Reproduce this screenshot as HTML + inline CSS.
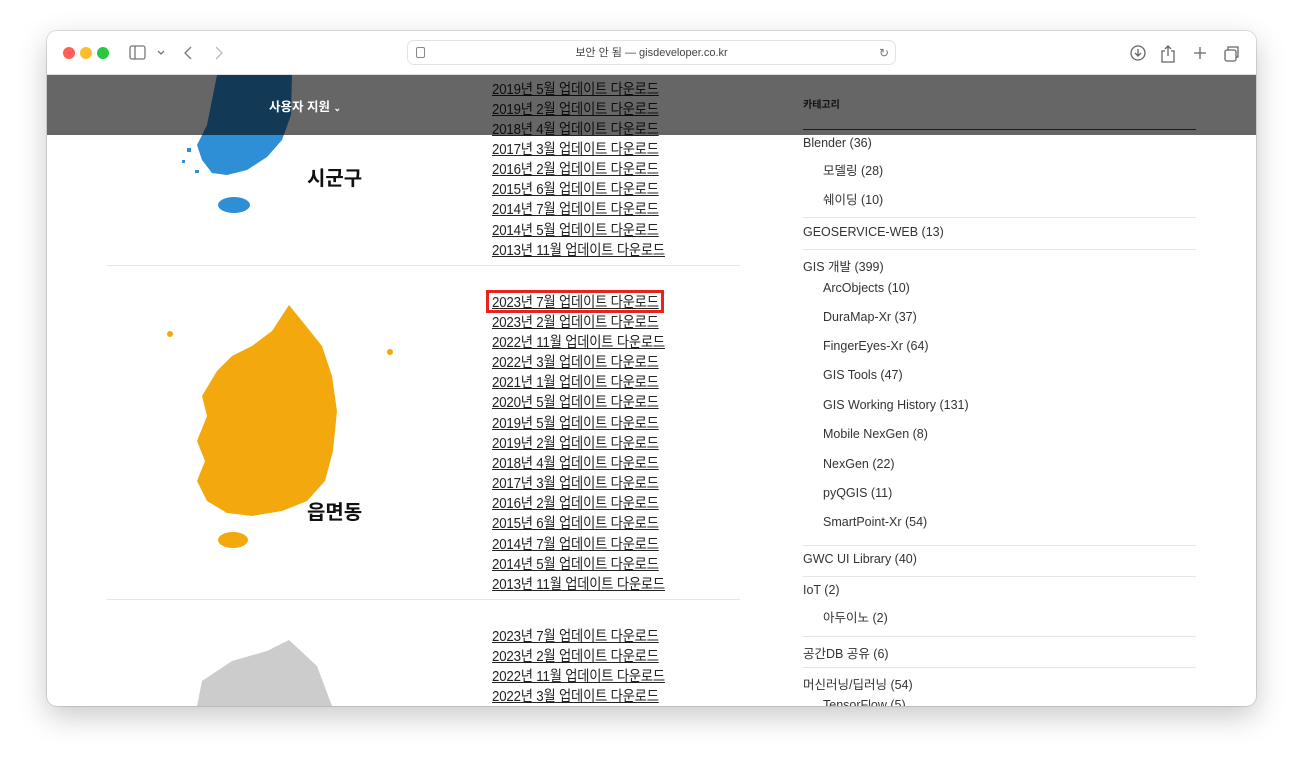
<!DOCTYPE html>
<html><head><meta charset="utf-8"><style>
*{margin:0;padding:0;box-sizing:border-box}
body{width:1303px;height:768px;background:#fff;position:relative;overflow:hidden;font-family:"Liberation Sans","Noto Sans CJK KR",sans-serif}
.win{position:absolute;left:47px;top:31px;width:1209px;height:675px;border-radius:10px;overflow:hidden;background:#fff;box-shadow:0 10px 30px rgba(0,0,0,.22),0 0 0 1px rgba(0,0,0,.12)}
.tb{position:absolute;left:0;top:0;width:100%;height:44px;background:#fff;border-bottom:1px solid #ddd}
.dot{position:absolute;top:16px;width:12px;height:12px;border-radius:50%}
.url{position:absolute;left:360px;top:9px;width:489px;height:25px;border:1px solid #e2e2e2;border-radius:7px;font-size:11px;color:#444;text-align:center;line-height:24px}
.a{position:absolute;left:445px;font-size:14.5px;color:#222;text-decoration:underline;white-space:nowrap;letter-spacing:-.2px;transform:scaleX(.915);transform-origin:0 0}
.hr{position:absolute;height:1px;background:#e6e6e6}
.s{position:absolute;font-size:12.5px;color:#333;white-space:nowrap}
.ov{position:absolute;left:0;top:44px;width:100%;height:60px;background:rgba(0,0,0,.6)}
</style></head><body>
<div class="win">
<div class="tb">
<div class="dot" style="left:16px;background:#fe5f57"></div>
<div class="dot" style="left:33px;background:#febc2e"></div>
<div class="dot" style="left:50px;background:#28c840"></div>
<svg style="position:absolute;left:82px;top:14px" width="150" height="16" fill="none" stroke="#777" stroke-width="1.3"><rect x="1" y="1" width="15" height="13" rx="2"/><line x1="6" y1="1" x2="6" y2="14"/><path d="M29 6l3 3 3-3"/><path d="M62 2l-6 6 6 6"/><path d="M87 2l6 6-6 6" stroke="#bbb"/></svg>
<div class="url"><span style="position:absolute;left:8px;top:6px;width:9px;height:11px;border:1px solid #888;border-radius:2px"></span>보안 안 됨 — gisdeveloper.co.kr<span style="position:absolute;right:6px;top:0;color:#777;font-size:12px">↻</span></div>
<svg style="position:absolute;left:1082px;top:13px" width="112" height="20" fill="none" stroke="#666" stroke-width="1.3"><circle cx="9" cy="9" r="7"/><path d="M9 5v7M6 9l3 3 3-3"/><path d="M36 7h-3v11h12V7h-3M39 2v10M36 5l3-3 3 3"/><path d="M71 3v12M65 9h12"/><rect x="96" y="6" width="11" height="11" rx="2"/><path d="M99 6V3h10v10h-2"/></svg>
</div>
<svg style="position:absolute;left:120px;top:44px" width="240" height="150"><path d="M50 0 L110 -10 L125 0 L124 40 L115 65 L100 82 L80 95 L60 100 L45 98 L35 85 L30 70 L40 50 Z" fill="#2e8fd6"/><path d="M20 73 l4 0 0 4 -4 0Z M15 85 l3 0 0 3-3 0Z M28 95 l4 0 0 3 -4 0Z" fill="#2e8fd6"/><ellipse cx="67" cy="130" rx="16" ry="8" fill="#2e8fd6"/></svg>
<div style="position:absolute;left:260px;top:131px;font-size:20px;font-weight:bold;color:#111">시군구</div>
<svg style="position:absolute;left:110px;top:270px" width="250" height="260"><path d="M132 4 L145 20 L165 45 L175 75 L180 110 L176 150 L168 180 L150 200 L125 210 L95 215 L70 212 L50 200 L40 180 L48 160 L40 140 L50 115 L45 95 L60 70 L75 55 L95 45 L115 30 Z" fill="#f3a90d"/><circle cx="13" cy="33" r="3" fill="#f3a90d"/><circle cx="233" cy="51" r="3" fill="#f3a90d"/><ellipse cx="76" cy="239" rx="15" ry="8" fill="#f3a90d"/></svg>
<div style="position:absolute;left:260px;top:465px;font-size:20px;font-weight:bold;color:#111">읍면동</div>
<svg style="position:absolute;left:110px;top:605px" width="250" height="70"><path d="M132 4 L160 30 L175 70 L40 70 L45 45 L75 25 L110 15Z" fill="#ccc"/></svg>
<div class="hr" style="left:60px;top:234px;width:633px"></div>
<div class="hr" style="left:60px;top:568px;width:633px"></div>
<div class="a" style="top:47px">2019년 5월 업데이트 다운로드</div>
<div class="a" style="top:67px">2019년 2월 업데이트 다운로드</div>
<div class="a" style="top:87px">2018년 4월 업데이트 다운로드</div>
<div class="a" style="top:107px">2017년 3월 업데이트 다운로드</div>
<div class="a" style="top:127px">2016년 2월 업데이트 다운로드</div>
<div class="a" style="top:147px">2015년 6월 업데이트 다운로드</div>
<div class="a" style="top:167px">2014년 7월 업데이트 다운로드</div>
<div class="a" style="top:188px">2014년 5월 업데이트 다운로드</div>
<div class="a" style="top:208px">2013년 11월 업데이트 다운로드</div>
<div style="position:absolute;left:439px;top:259px;width:178px;height:23px;border:3px solid #e8231a"></div>
<div class="a" style="top:260px">2023년 7월 업데이트 다운로드</div>
<div class="a" style="top:280px">2023년 2월 업데이트 다운로드</div>
<div class="a" style="top:300px">2022년 11월 업데이트 다운로드</div>
<div class="a" style="top:320px">2022년 3월 업데이트 다운로드</div>
<div class="a" style="top:340px">2021년 1월 업데이트 다운로드</div>
<div class="a" style="top:360px">2020년 5월 업데이트 다운로드</div>
<div class="a" style="top:381px">2019년 5월 업데이트 다운로드</div>
<div class="a" style="top:401px">2019년 2월 업데이트 다운로드</div>
<div class="a" style="top:421px">2018년 4월 업데이트 다운로드</div>
<div class="a" style="top:441px">2017년 3월 업데이트 다운로드</div>
<div class="a" style="top:461px">2016년 2월 업데이트 다운로드</div>
<div class="a" style="top:481px">2015년 6월 업데이트 다운로드</div>
<div class="a" style="top:502px">2014년 7월 업데이트 다운로드</div>
<div class="a" style="top:522px">2014년 5월 업데이트 다운로드</div>
<div class="a" style="top:542px">2013년 11월 업데이트 다운로드</div>
<div class="a" style="top:594px">2023년 7월 업데이트 다운로드</div>
<div class="a" style="top:614px">2023년 2월 업데이트 다운로드</div>
<div class="a" style="top:634px">2022년 11월 업데이트 다운로드</div>
<div class="a" style="top:654px">2022년 3월 업데이트 다운로드</div>
<div class="hr" style="left:756px;top:98px;width:393px;background:#444"></div>
<div class="hr" style="left:756px;top:186px;width:393px"></div>
<div class="hr" style="left:756px;top:218px;width:393px"></div>
<div class="hr" style="left:756px;top:514px;width:393px"></div>
<div class="hr" style="left:756px;top:545px;width:393px"></div>
<div class="hr" style="left:756px;top:605px;width:393px"></div>
<div class="hr" style="left:756px;top:636px;width:393px"></div>
<div class="s" style="left:756px;top:105px">Blender (36)</div>
<div class="s" style="left:776px;top:129px">모델링 (28)</div>
<div class="s" style="left:776px;top:158px">쉐이딩 (10)</div>
<div class="s" style="left:756px;top:194px">GEOSERVICE-WEB (13)</div>
<div class="s" style="left:756px;top:225px">GIS 개발 (399)</div>
<div class="s" style="left:776px;top:250px">ArcObjects (10)</div>
<div class="s" style="left:776px;top:279px">DuraMap-Xr (37)</div>
<div class="s" style="left:776px;top:308px">FingerEyes-Xr (64)</div>
<div class="s" style="left:776px;top:337px">GIS Tools (47)</div>
<div class="s" style="left:776px;top:367px">GIS Working History (131)</div>
<div class="s" style="left:776px;top:396px">Mobile NexGen (8)</div>
<div class="s" style="left:776px;top:426px">NexGen (22)</div>
<div class="s" style="left:776px;top:455px">pyQGIS (11)</div>
<div class="s" style="left:776px;top:484px">SmartPoint-Xr (54)</div>
<div class="s" style="left:756px;top:521px">GWC UI Library (40)</div>
<div class="s" style="left:756px;top:552px">IoT (2)</div>
<div class="s" style="left:776px;top:576px">아두이노 (2)</div>
<div class="s" style="left:756px;top:612px">공간DB 공유 (6)</div>
<div class="s" style="left:756px;top:643px">머신러닝/딥러닝 (54)</div>
<div class="s" style="left:776px;top:667px">TensorFlow (5)</div>
<div class="ov"></div>
<div style="position:absolute;left:222px;top:65px;font-size:12.5px;font-weight:bold;color:#fff">사용자 지원 <span style="font-size:9px">⌄</span></div>
<div style="position:absolute;left:756px;top:65px;font-size:10px;font-weight:bold;color:#111">카테고리</div>
</div>
</body></html>
